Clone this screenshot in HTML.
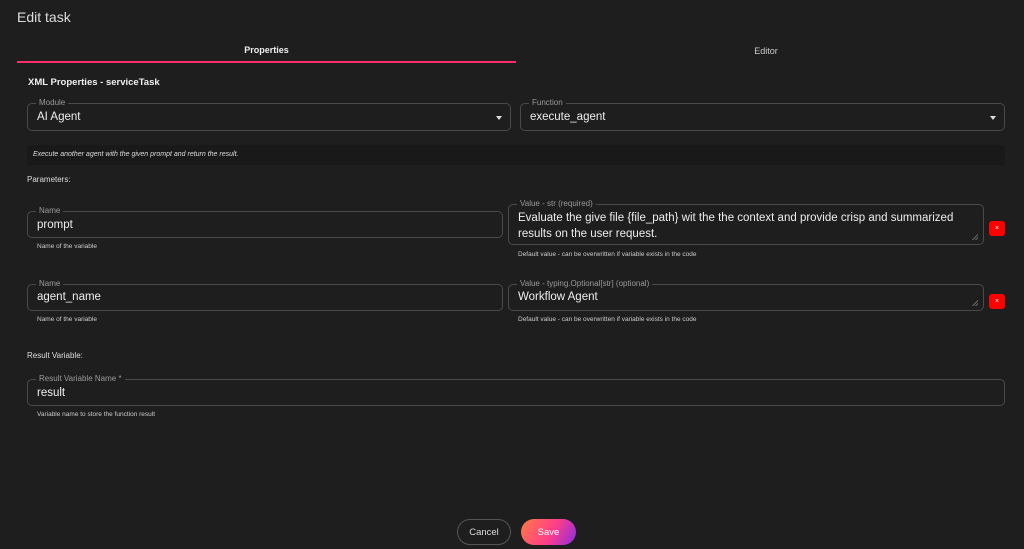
<!DOCTYPE html>
<html><head><style>
*{box-sizing:border-box;margin:0;padding:0}
body{width:1024px;height:549px;background:#1e1e1e;font-family:"Liberation Sans",sans-serif;color:#e6e6e6;position:relative;overflow:hidden}
.a{position:absolute}
.f{position:absolute;border:1px solid #4a4a4a;border-radius:5px}
.f .l{position:absolute;top:-6px;left:8px;background:#1e1e1e;padding:0 3px;font-size:8px;color:#9a9a9a;line-height:10px}
.f .v{position:absolute;left:9px;font-size:11.5px;color:#eee}
.h{position:absolute;font-size:6.5px;color:#ccc}
.arr{position:absolute;right:8px;top:12px;width:0;height:0;border-left:3.5px solid transparent;border-right:3.5px solid transparent;border-top:4px solid #ddd}
.x{position:absolute;width:16px;height:15px;background:#f00;border-radius:3px;color:#fff;font-size:7px;text-align:center;line-height:15px}
.rs{position:absolute;right:5px;bottom:4px;width:6px;height:6px;background:linear-gradient(135deg,transparent 50%,#666 50%,#666 60%,transparent 60%,transparent 75%,#666 75%,#666 85%,transparent 85%)}
</style></head><body>
<div class="a" style="left:17px;top:9px;font-size:14px;color:#ddd">Edit task</div>
<div class="a" style="left:17px;top:45px;width:499px;text-align:center;font-size:9px;font-weight:bold;color:#eee">Properties</div>
<div class="a" style="left:17px;top:61px;width:499px;height:2px;background:#ff2d6f"></div>
<div class="a" style="left:516px;top:46px;width:500px;text-align:center;font-size:9px;color:#ccc">Editor</div>
<div class="a" style="left:28px;top:77px;font-size:9.5px;font-weight:bold;color:#f0f0f0">XML Properties - serviceTask</div>

<div class="f" style="left:27px;top:103px;width:484px;height:28px"><span class="l">Module</span><span class="v" style="top:7px">AI Agent</span><div class="arr"></div></div>
<div class="f" style="left:520px;top:103px;width:485px;height:28px"><span class="l">Function</span><span class="v" style="top:7px">execute_agent</span><div class="arr"></div></div>

<div class="a" style="left:27px;top:145px;width:978px;height:20px;background:#191919"></div>
<div class="a" style="left:33px;top:151px;font-size:7px;font-style:italic;color:#ddd">Execute another agent with the given prompt and return the result.</div>
<div class="a" style="left:27px;top:175px;font-size:8px;color:#ddd">Parameters:</div>

<div class="f" style="left:27px;top:211px;width:476px;height:27px"><span class="l">Name</span><span class="v" style="top:7px">prompt</span></div>
<div class="h" style="left:37px;top:243px">Name of the variable</div>
<div class="f" style="left:508px;top:204px;width:476px;height:41px"><span class="l">Value - str (required)</span><span class="v" style="top:5px;line-height:16px;width:450px">Evaluate the give file {file_path} wit the the context and provide crisp and summarized results on the user request.</span><div class="rs"></div></div>
<div class="h" style="left:518px;top:251px">Default value - can be overwritten if variable exists in the code</div>
<div class="x" style="left:989px;top:221px">×</div>

<div class="f" style="left:27px;top:284px;width:476px;height:27px"><span class="l">Name</span><span class="v" style="top:6px">agent_name</span></div>
<div class="h" style="left:37px;top:316px">Name of the variable</div>
<div class="f" style="left:508px;top:284px;width:476px;height:27px"><span class="l">Value - typing.Optional[str] (optional)</span><span class="v" style="top:6px">Workflow Agent</span><div class="rs"></div></div>
<div class="h" style="left:518px;top:316px">Default value - can be overwritten if variable exists in the code</div>
<div class="x" style="left:989px;top:294px">×</div>

<div class="a" style="left:27px;top:351px;font-size:8px;color:#ddd">Result Variable:</div>
<div class="f" style="left:27px;top:379px;width:978px;height:27px"><span class="l">Result Variable Name *</span><span class="v" style="top:7px">result</span></div>
<div class="h" style="left:37px;top:411px">Variable name to store the function result</div>

<div class="a" style="left:457px;top:519px;width:54px;height:26px;border:1px solid #555;border-radius:13px;font-size:9.5px;color:#ddd;text-align:center;line-height:26px">Cancel</div>
<div class="a" style="left:521px;top:519px;width:55px;height:26px;border-radius:13px;background:linear-gradient(120deg,#ff7a45,#ff3d8a 55%,#8a2be2);font-size:9.5px;color:#fff;text-align:center;line-height:27px">Save</div>
</body></html>
